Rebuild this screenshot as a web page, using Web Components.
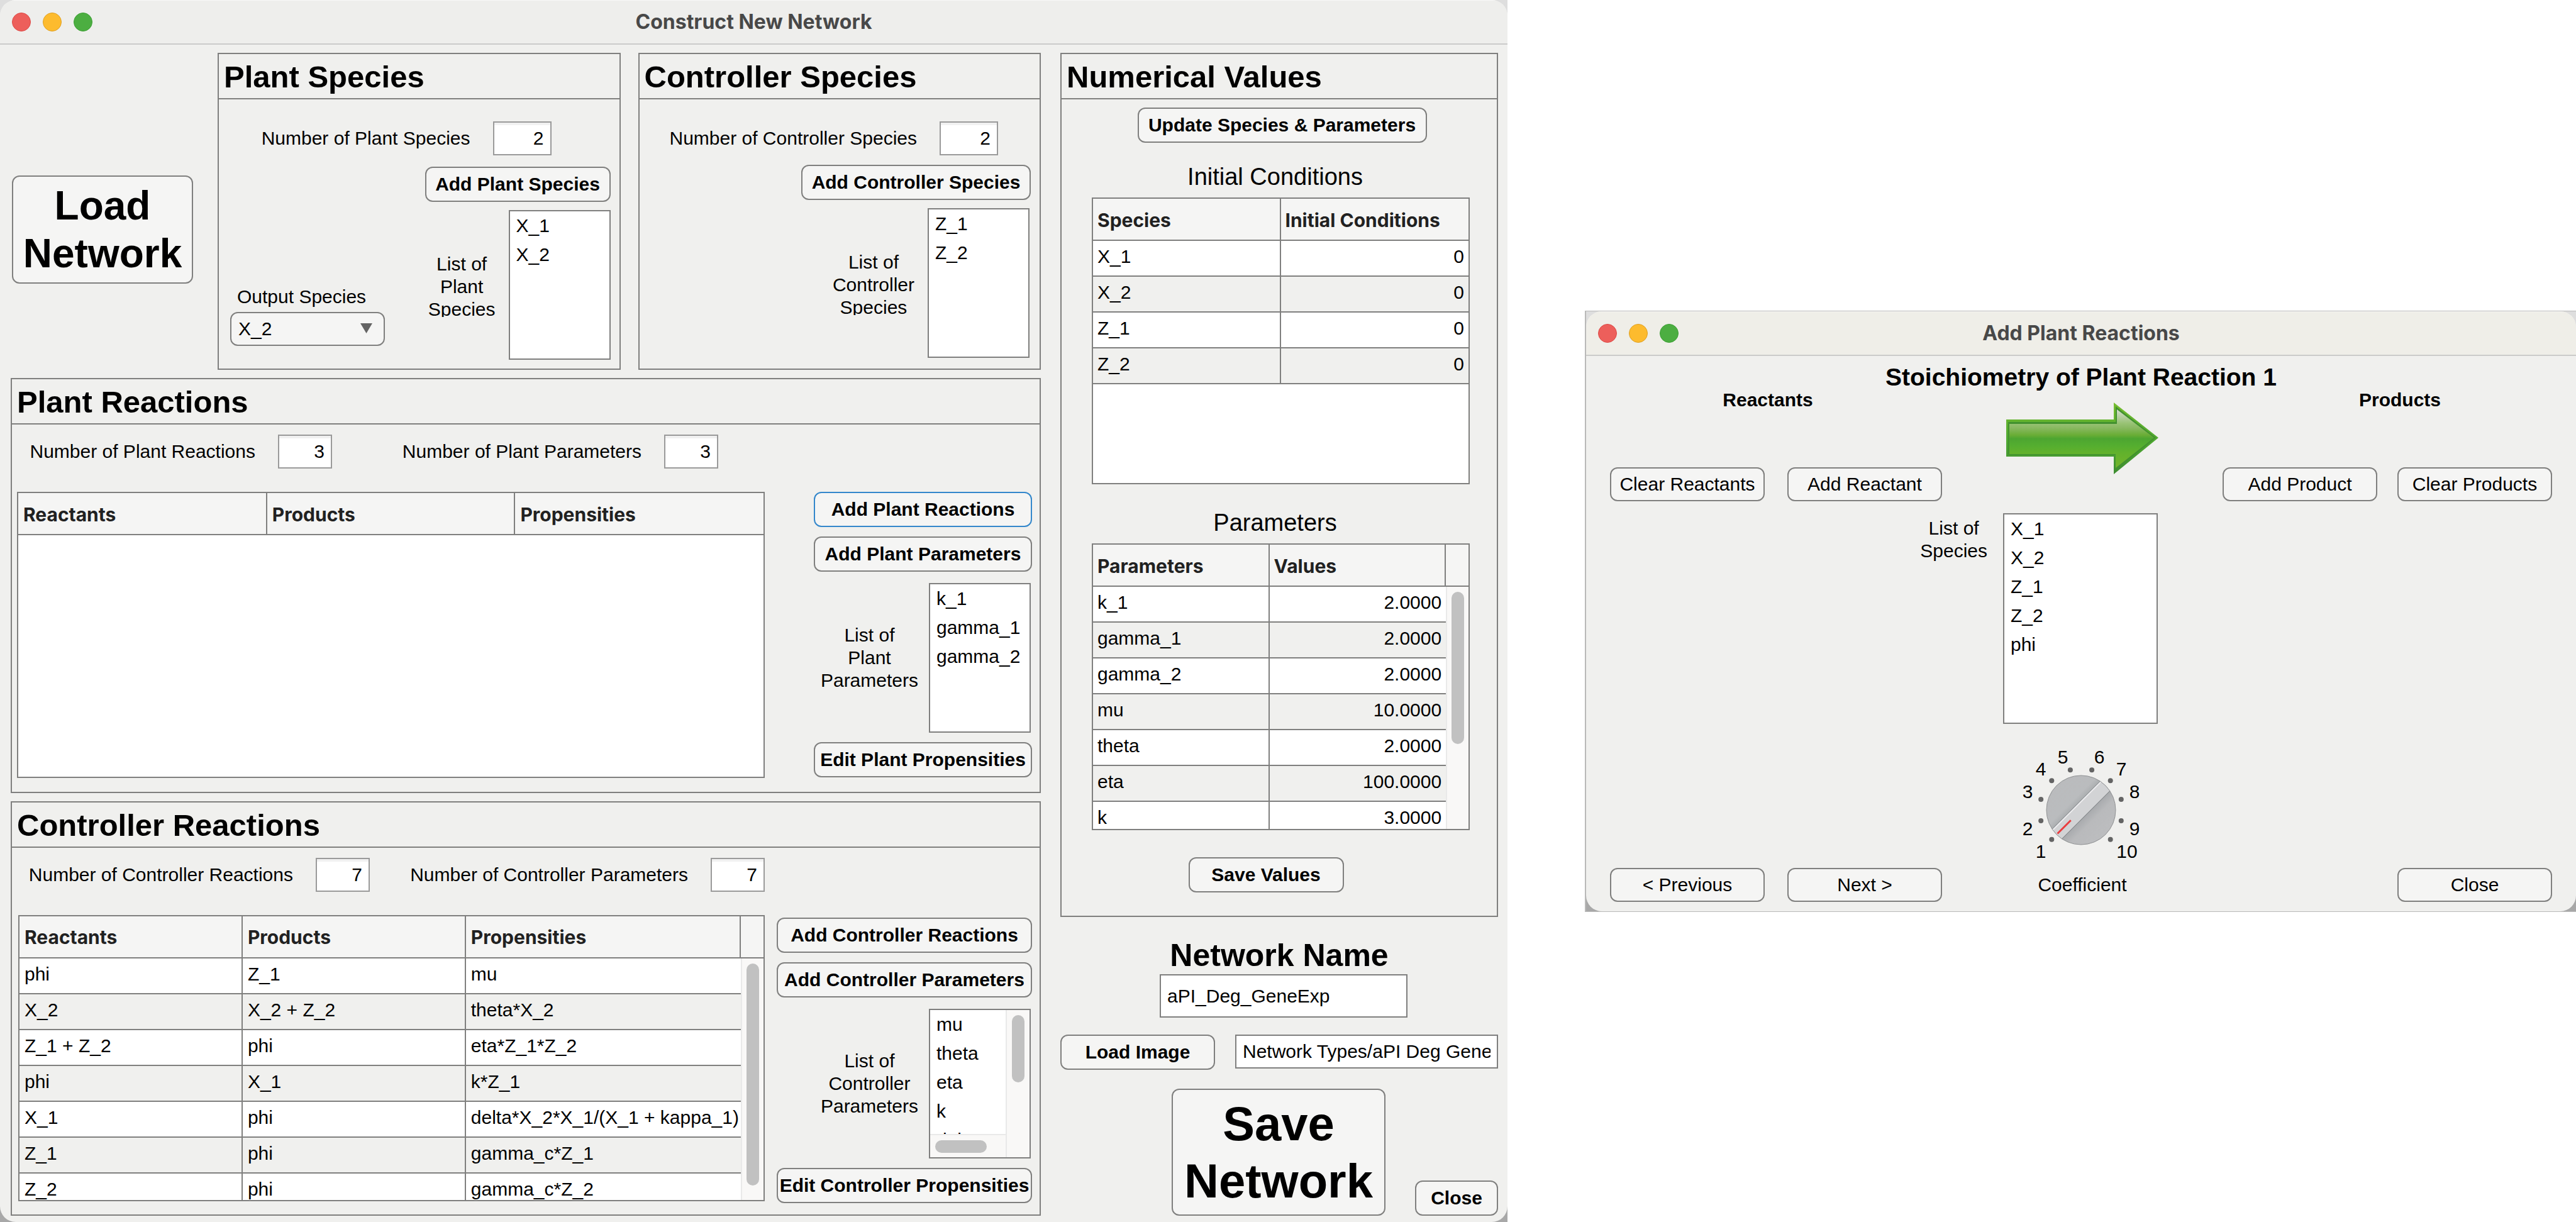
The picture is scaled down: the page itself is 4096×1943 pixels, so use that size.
<!DOCTYPE html>
<html lang="en">
<head>
<meta charset="utf-8">
<title>Construct New Network</title>
<style>
  :root {
    --line: #7f7f7e;
    --surface: #f0f0ee;
    --raised: #f5f5f4;
  }
  body {
    margin: 0;
    min-height: 100vh;
    display: grid;
    grid-template-columns: 2397fr 1576fr;
    column-gap: 123px;
    background: #fff;
    color: #000;
    font: 30px/36px "Liberation Sans", Arial, sans-serif;
  }
</style>
</head>
<body>
<construct-window></construct-window>
<reaction-window></reaction-window>

<script>
const define = (name, css, html) => {
  customElements.define(name, class extends HTMLElement {
    connectedCallback() {
      if (this.shadowRoot) return;
      const root = this.attachShadow({ mode: "open" });
      const body = typeof html === "function" ? html(this) : html;
      root.innerHTML = `<style>*{box-sizing:border-box}:host{box-sizing:border-box}${css}</style>${body}`;
    }
  });
};
const attr = (el, name, fallback = "") => el.getAttribute(name) ?? fallback;

/* Window frame with traffic lights and a centred title */
define("app-window", `
  :host { display: block; background: linear-gradient(#dedede 0 50%, #a8a8a8 50%); }
  .frame { display: flex; flex-direction: column; height: 100%; border-radius: 25px; overflow: hidden; background: var(--surface); }
  header { display: grid; grid-template-columns: 1fr auto 1fr; align-items: center; height: 71px;
    background: var(--bar, #eeeeec); border-bottom: 2px solid #cbcbca; border-top: 1px solid #f8f8f7; flex: none; }
  .lights { display: flex; gap: 19px; padding-left: 19px; }
  i { width: 30px; height: 30px; border-radius: 50%; border: 1px solid; }
  i:nth-child(1) { background: #ed5f5b; border-color: #dd4a47; }
  i:nth-child(2) { background: #fdbb2e; border-color: #dfa023; }
  i:nth-child(3) { background: #4cae41; border-color: #3b9f33; }
  h1 { margin: 0; font: 700 32px/36px Inter, sans-serif; color: #484848; }
  main { flex: 1; display: flex; flex-direction: column; }
`, el => `<div class="frame"><header><div class="lights"><i></i><i></i><i></i></div>
  <h1>${attr(el, "heading")}</h1></header><main><slot></slot></main></div>`);

/* Titled group box */
define("app-panel", `
  :host { display: flex; flex-direction: column; border: 2px solid var(--line); }
  h2 { margin: 0; padding: 2px 8px 0; font: 700 49px/68px "Liberation Sans", Arial, sans-serif; border-bottom: 2px solid var(--line); }
  .body { flex: 1; display: flex; flex-direction: column; }
`, el => `<h2>${attr(el, "heading")}</h2><div class="body"><slot></slot></div>`);

define("push-button", `
  :host { display: block; }
  button { display: block; width: 100%; height: 100%; min-height: 56px; margin: 0; padding: 0; white-space: nowrap;
    border: 2px solid var(--line); border-radius: 12px; background: var(--raised); color: #000; font: inherit; font-weight: 700; }
  :host([plain]) button { font-weight: 400; min-height: 54px; }
  :host([active]) button { border-color: #3387cb; }
  :host([size="large"]) button { font-size: 64px; line-height: 76px; }
  :host([size="huge"]) button { font-size: 76px; line-height: 91px; }
`, `<button type="button"><slot></slot></button>`);

/* Label and small right-aligned number box */
define("number-field", `
  :host { display: flex; justify-content: flex-end; align-items: center; gap: 36px; white-space: nowrap; }
  input { width: 86px; height: 54px; margin: 0; padding: 0 10px; text-align: right; font: inherit; color: #000; background: #fff;
    border: 2px solid #9a9a9a; border-radius: 0; box-shadow: inset 0 4px 0 #f1f1f1; }
  :host([wide]) input { width: 93px; }
`, el => `<label for="n">${attr(el, "label")}</label><input id="n" type="text" inputmode="numeric" value="${attr(el, "value")}">`);

/* Caption and list of names, optionally with scroll bars */
define("name-list", `
  :host { display: flex; justify-content: flex-end; align-items: center; gap: 17px; }
  .caption { text-align: center; white-space: pre-line; }
  :host([clip]) { gap: 21px; }
  :host([clip]) .caption { height: 102px; overflow: hidden; }
  .box { position: relative; width: var(--list-width, 162px); height: 238px; border: 2px solid var(--line); background: #fff;
    display: grid; grid-template-columns: 1fr auto; grid-template-rows: 1fr auto; flex: none; }
  :host([tall]) { align-items: flex-start; gap: 25px; }
  :host([tall]) .box { height: 335px; }
  :host([tall]) .caption { padding-top: 6px; }
  ul { margin: 0; padding: 0 0 0 10px; list-style: none; overflow: hidden; min-height: 0; line-height: 46px; }
  .v, .h { background: #f9f8f7; }
  .v { width: 38px; border-left: 2px solid #e9e9e9; padding: 8px 7px 0 8px; grid-row: span 2; }
  .h { height: 37px; border-top: 2px solid #e9e9e9; padding: 8px 0 0 8px; }
  .v b, .h b { display: block; border-radius: 10px; background: #c1c1c1; }
  .v b { width: 20px; height: 107px; }
  .h b { width: 82px; height: 20px; }
`, el => {
  const items = attr(el, "items").split(",").map(t => `<li role="option">${t}</li>`).join("");
  const bars = el.hasAttribute("scroll") ? `<div class="v"><b></b></div><div class="h"><b></b></div>` : "";
  return `<div class="caption" id="c">${attr(el, "label").split("|").join("\n")}</div>
    <div class="box"><ul role="listbox" aria-labelledby="c" tabindex="0">${items}</ul>${bars}</div>`;
});

define("drop-down", `
  :host { display: flex; flex-direction: column; gap: 6px; }
  label { padding-left: 11px; }
  .wrap { position: relative; }
  select { appearance: none; width: 100%; height: 54px; margin: 0; padding: 0 11px; font: inherit; color: #000;
    background: var(--raised); border: 2px solid var(--line); border-radius: 12px; }
  svg { position: absolute; right: 20px; top: 18px; pointer-events: none; }
`, el => `<label for="s">${attr(el, "label")}</label><div class="wrap"><select id="s">
  ${attr(el, "options").split(",").map(o => `<option ${o === attr(el, "value") ? "selected" : ""}>${o}</option>`).join("")}
  </select><svg width="19" height="16"><path d="M0 0H19L9.500 16Z" fill="#646464"/></svg></div>`);

/* Data table inside a fixed viewport; thumb = height of the scroll thumb */
define("data-table", `
  :host { display: block; overflow: hidden; border: 2px solid var(--line); background: #fff; }
  table { width: 100%; table-layout: fixed; border-collapse: separate; border-spacing: 0; }
  th, td { padding: 0 8px; text-align: left; white-space: nowrap; border-right: 2px solid var(--line); border-bottom: 2px solid var(--line); }
  th { height: 67px; padding-top: 2px; font: 700 30px/36px Inter, sans-serif; color: #212121; background: var(--raised); }
  td { height: 57px; padding-bottom: 5px; }
  tr:nth-child(even) td { background: var(--surface); }
  th:last-child, td:last-child { border-right: 0; }
  :host([numeric]) :is(th, td) { padding-left: 7px; padding-right: 7px; }
  :host([numeric]) td:nth-child(2) { text-align: right; }
  :host([thumb]) td:nth-child(n+2):not(:nth-child(2)), :host([thumb][numeric]) td:nth-child(2) { border-right: 0; }
  tr td.bar, tr:nth-child(even) td.bar { background: #f9f8f7; vertical-align: top; padding: 8px 6px 0; border: 0; border-left: 2px solid #e9e9e9; }
  .bar b { display: block; width: 20px; margin: auto; border-radius: 10px; background: #c1c1c1; }
`, el => {
  const cols = attr(el, "columns").split("|");
  const widths = attr(el, "widths").split(" ");
  const rows = attr(el, "rows") ? attr(el, "rows").split(";").map(r => r.split("|")) : [];
  const thumb = attr(el, "thumb");
  return `<table><colgroup>${widths.map(w => `<col style="width:${w}">`).join("")}${thumb ? "<col>" : ""}</colgroup>
    <thead><tr>${cols.map(c => `<th scope="col">${c}</th>`).join("")}${thumb ? "<th></th>" : ""}</tr></thead>
    <tbody>${rows.map((r, i) => `<tr>${r.map(c => `<td>${c}</td>`).join("")}${thumb && !i ?
      `<td class="bar" rowspan="${rows.length}"><b style="height:${thumb}px"></b></td>` : ""}</tr>`).join("")}</tbody></table>`;
});

/* Rotary selector from 1 to 10 */
define("rotary-dial", `
  :host { display: block; position: relative; width: 220px; height: 184px; }
  input { position: absolute; inset: 0; width: 100%; height: 100%; margin: 0; opacity: 0; }
  text { font: 30px "Liberation Sans", Arial, sans-serif; text-anchor: middle; fill: #000; }
`, () => {
  const dots = [...Array(10)].map((_, i) => {
    const a = (-135 + i * 30) * Math.PI / 180;
    return `<circle cx="${(110 + 66 * Math.sin(a)).toFixed(1)}" cy="${(102 - 66 * Math.cos(a)).toFixed(1)}" r="4"/>`;
  }).join("");
  const marks = [[46,178],[25,142],[25,83],[46,47],[81,28],[139,28],[174,47],[195,83],[195,142],[183,178]];
  return `<svg width="220" height="184" viewBox="0 0 220 184">
    <defs>
      <linearGradient id="g" x1="0" y1="0" x2="0" y2="1">
        <stop offset="0" stop-color="#babbbd"/><stop offset=".34" stop-color="#babcbe"/><stop offset=".4" stop-color="#aeb1b3"/>
        <stop offset=".6" stop-color="#aaacaf"/><stop offset=".7" stop-color="#b9babc"/><stop offset="1" stop-color="#bdbec0"/>
      </linearGradient>
      <clipPath id="k"><circle cx="110" cy="102" r="55"/></clipPath>
    </defs>
    <g fill="#646464">${dots}</g>
    <g clip-path="url(#k)"><g transform="rotate(-45 110 102)">
      <rect x="50" y="40" width="120" height="124" fill="url(#g)"/>
      <rect x="50" y="91" width="120" height="22" fill="#d2d3d5"/>
      <path d="M50 91H170M50 113H170" stroke="#85888b" stroke-width="1"/>
      <path d="M50 92.500H170" stroke="#ececee" stroke-width="2"/>
      <path d="M57 102H87" stroke="#ea3d3f" stroke-width="3"/>
    </g></g>
    <circle cx="110" cy="102" r="55" fill="none" stroke="#8f9193" stroke-width="1"/>
    ${marks.map(([x, y], i) => `<text x="${x}" y="${y}">${i + 1}</text>`).join("")}
  </svg><input type="range" min="1" max="10" value="1" aria-label="Coefficient">`;
});

define("green-arrow", `
  :host { display: block; } svg { display: block; }
`, `<svg width="242" height="114" viewBox="0 0 242 114">
  <defs>
    <linearGradient id="s" x1="0" y1="0" x2="0" y2="1">
      <stop offset="0" stop-color="#d5dcd0"/><stop offset=".24" stop-color="#98c274"/><stop offset=".32" stop-color="#88b860"/>
      <stop offset=".44" stop-color="#69ad35"/><stop offset=".5" stop-color="#4da531"/><stop offset=".6" stop-color="#53ad30"/>
      <stop offset=".75" stop-color="#62b22c"/><stop offset="1" stop-color="#73b42a"/>
    </linearGradient>
    <linearGradient id="e" x1="0" y1="0" x2="0" y2="1">
      <stop offset="0" stop-color="#77bd2f"/><stop offset=".5" stop-color="#4fa92f"/><stop offset="1" stop-color="#3d8d31"/>
    </linearGradient>
  </defs>
  <path d="M0 27H171V0L242 56L171 114V86H0Z" fill="url(#e)"/>
  <path d="M3 31H174V6L238 56L174 107V83H3Z" fill="#42912f"/>
  <path d="M5 34H176V11L235 56L174 104V82H5Z" fill="url(#s)"/>
</svg>`);

define("name-field", `
  :host { display: flex; flex-direction: column; }
  label { font: 700 50px/59px "Liberation Sans", Arial, sans-serif; align-self: center; }
  input { width: 394px; height: 69px; margin: 0 0 0 158px; padding: 0 10px; font: inherit; color: #000; background: #fff; border: 2px solid var(--line); border-radius: 0; }
`, `<label for="f">Network Name</label><input id="f" type="text" value="aPI_Deg_GeneExp">`);

define("path-field", `
  :host { display: block; }
  input { display: block; width: 100%; height: 54px; margin: 0; padding: 0 10px; font: inherit; color: #000; background: #fff; border: 2px solid var(--line); border-radius: 0; }
`, `<input type="text" aria-label="Image folder" value="Network Types/aPI Deg Gene">`);

define("construct-window", `
  :host, app-window { display: block; }
  app-window { height: 100%; }
  .page { flex: 1; display: grid; grid-template-columns: 1638fr 696fr; column-gap: 31px; padding: 13px 15px 10px 17px; }
  .left { display: grid; grid-template-rows: auto 1fr 1fr; row-gap: 13px; }
  .species { display: grid; grid-template-columns: 301px 1fr 1fr; column-gap: 28px; }
  .load { padding: 195px 11px 0 2px; }
  .load push-button { height: 172px; }
  .stack { flex: 1; display: flex; flex-direction: column; align-items: flex-end; padding: 35px 14px 14px 18px; }
  .stack push-button { margin: 18px 0 13px; width: 295px; }
  .stack.c push-button { margin-top: 15px; width: 365px; }
  .stack.p number-field { margin-right: 94px; }
  .stack.c number-field { margin-right: 52px; }
  .stack.c name-list { margin-right: 2px; }
  .outputs { display: flex; justify-content: space-between; align-items: flex-end; width: 100%; }
  .outputs drop-down { width: 246px; margin-bottom: 22px; }
  .counts { display: flex; padding: 16px 0 37px 8px; }
  .reactions { flex: 1; display: flex; gap: 78px; padding: 0 12px 20px 8px; }
  .reactions.c { gap: 19px; padding: 0 12px 16px 10px; }
  .reactions data-table { flex: 1; height: 455px; }
  .side { display: flex; flex-direction: column; width: 347px; }
  .c .side { width: 406px; padding-top: 4px; }
  .side push-button { margin-bottom: 15px; }
  .side push-button:last-child { margin: 0; }
  .side name-list { margin: 3px 2px 15px 0; }
  .right { display: flex; flex-direction: column; }
  .values { display: flex; flex-direction: column; padding: 13px 43px 37px 48px; }
  .values push-button { width: 460px; align-self: center; margin-left: 4px; }
  .values h3 { margin: 31px 0 10px; padding-right: 18px; font: 38px/46px "Liberation Sans", Arial, sans-serif; text-align: center; }
  .values h3 ~ h3 { margin-top: 38px; }
  .values data-table { height: 456px; }
  .values .save { width: 247px; margin: 43px 47px 0 0; }
  name-field { margin: 32px 0 27px; }
  .image { display: flex; gap: 32px; margin-bottom: 30px; }
  .image push-button { width: 246px; }
  .image path-field { flex: 1; }
  .end { display: flex; align-items: flex-end; gap: 47px; padding-left: 177px; }
  .end push-button:first-child { width: 340px; height: 202px; }
  .end push-button:last-child { flex: 1; }
`, `<app-window heading="Construct New Network"><div class="page">
  <div class="left">
    <div class="species">
      <div class="load"><push-button size="large">Load<br>Network</push-button></div>
      <app-panel heading="Plant Species"><div class="stack p">
        <number-field wide label="Number of Plant Species" value="2"></number-field>
        <push-button>Add Plant Species</push-button>
        <div class="outputs">
          <drop-down label="Output Species" options="X_1,X_2" value="X_2"></drop-down>
          <name-list clip label="List of|Plant|Species" items="X_1,X_2"></name-list>
        </div>
      </div></app-panel>
      <app-panel heading="Controller Species"><div class="stack c">
        <number-field wide label="Number of Controller Species" value="2"></number-field>
        <push-button>Add Controller Species</push-button>
        <name-list clip label="List of|Controller|Species" items="Z_1,Z_2"></name-list>
      </div></app-panel>
    </div>
    <app-panel heading="Plant Reactions">
      <div class="counts">
        <number-field style="width:501px" label="Number of Plant Reactions" value="3"></number-field>
        <number-field style="width:614px" label="Number of Plant Parameters" value="3"></number-field>
      </div>
      <div class="reactions">
        <data-table columns="Reactants|Products|Propensities" widths="33.4% 33.3% 33.3%"></data-table>
        <div class="side">
          <push-button active>Add Plant Reactions</push-button>
          <push-button>Add Plant Parameters</push-button>
          <name-list label="List of|Plant|Parameters" items="k_1,gamma_1,gamma_2"></name-list>
          <push-button>Edit Plant Propensities</push-button>
        </div>
      </div>
    </app-panel>
    <app-panel heading="Controller Reactions">
      <div class="counts">
        <number-field style="width:561px" label="Number of Controller Reactions" value="7"></number-field>
        <number-field style="width:628px" label="Number of Controller Parameters" value="7"></number-field>
      </div>
      <div class="reactions c">
        <data-table columns="Reactants|Products|Propensities" widths="30% 30% 37%" thumb="353"
          rows="phi|Z_1|mu;X_2|X_2 + Z_2|theta*X_2;Z_1 + Z_2|phi|eta*Z_1*Z_2;phi|X_1|k*Z_1;X_1|phi|delta*X_2*X_1/(X_1 + kappa_1);Z_1|phi|gamma_c*Z_1;Z_2|phi|gamma_c*Z_2"></data-table>
        <div class="side">
          <push-button>Add Controller Reactions</push-button>
          <push-button>Add Controller Parameters</push-button>
          <name-list scroll label="List of|Controller|Parameters" items="mu,theta,eta,k,delta"></name-list>
          <push-button>Edit Controller Propensities</push-button>
        </div>
      </div>
    </app-panel>
  </div>
  <div class="right">
    <app-panel heading="Numerical Values"><div class="values">
      <push-button>Update Species &amp; Parameters</push-button>
      <h3>Initial Conditions</h3>
      <data-table numeric columns="Species|Initial Conditions" widths="50% 50%" rows="X_1|0;X_2|0;Z_1|0;Z_2|0"></data-table>
      <h3>Parameters</h3>
      <data-table numeric columns="Parameters|Values" widths="47% 47%" thumb="242"
        rows="k_1|2.0000;gamma_1|2.0000;gamma_2|2.0000;mu|10.0000;theta|2.0000;eta|100.0000;k|3.0000"></data-table>
      <push-button class="save">Save Values</push-button>
    </div></app-panel>
    <name-field></name-field>
    <div class="image"><push-button>Load Image</push-button><path-field></path-field></div>
    <div class="end"><push-button size="huge">Save<br>Network</push-button><push-button>Close</push-button></div>
  </div>
</div></app-window>`);

define("reaction-window", `
  :host { display: block; align-self: center; --bar: #efeee8; background: #b9b9b8; padding: 1px 0 1px 2px; }
  .page { padding: 14px 38px 15px; }
  h2 { margin: 0; font: 700 39px/40px "Liberation Sans", Arial, sans-serif; text-align: center; }
  .cols { display: grid; grid-template-columns: 528fr 446fr 524fr; }
  .side { display: flex; flex-direction: column; gap: 91px; }
  h3 { margin: 0; font: 700 30px/32px "Liberation Sans", Arial, sans-serif; text-align: center; }
  .side:first-child h3 { padding-right: 26px; }
  .side:last-child h3 { padding-left: 40px; }
  .pair { display: flex; justify-content: space-between; }
  push-button { width: 246px; }
  green-arrow { justify-self: center; padding-top: 20px; }
  .pick { display: grid; grid-template-columns: 1fr 246px 1fr; padding: 19px 2px 35px 0; --list-width: 246px; }
  name-list { grid-column: 1 / 3; }
  rotary-dial { margin: 0 auto 10px; }
  .foot { align-items: center; }
  .foot span { text-align: center; }
  .foot push-button:last-child { justify-self: end; }
`, `<app-window heading="Add Plant Reactions"><div class="page">
  <h2>Stoichiometry of Plant Reaction 1</h2>
  <div class="cols">
    <div class="side"><h3>Reactants</h3>
      <div class="pair"><push-button plain>Clear Reactants</push-button><push-button plain>Add Reactant</push-button></div></div>
    <green-arrow></green-arrow>
    <div class="side"><h3>Products</h3>
      <div class="pair"><push-button plain>Add Product</push-button><push-button plain>Clear Products</push-button></div></div>
  </div>
  <div class="pick"><name-list tall label="List of|Species" items="X_1,X_2,Z_1,Z_2,phi"></name-list></div>
  <rotary-dial></rotary-dial>
  <div class="cols foot">
    <div class="pair"><push-button plain>&lt; Previous</push-button><push-button plain>Next &gt;</push-button></div>
    <span>Coefficient</span>
    <push-button plain>Close</push-button>
  </div>
</div></app-window>`);
</script>
</body>
</html>
